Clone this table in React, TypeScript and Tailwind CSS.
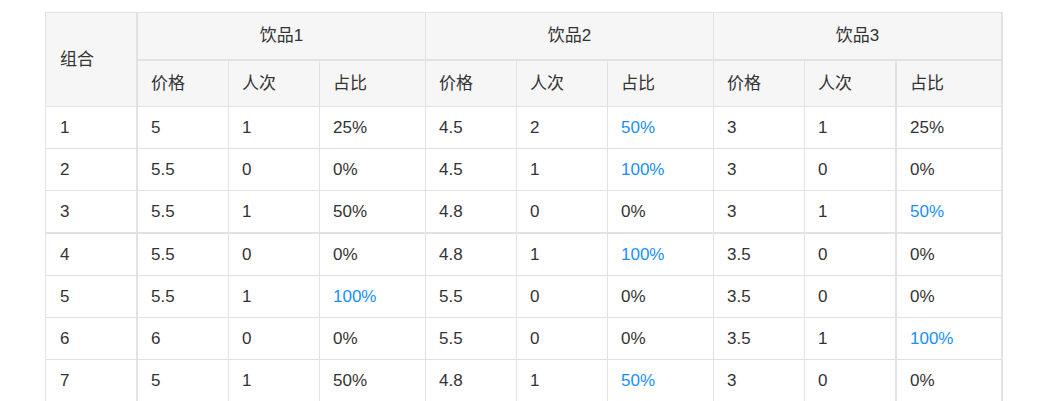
import React from "react";

const rows: string[][] = [
  ["1", "5", "1", "25%", "4.5", "2", "50%", "3", "1", "25%"],
  ["2", "5.5", "0", "0%", "4.5", "1", "100%", "3", "0", "0%"],
  ["3", "5.5", "1", "50%", "4.8", "0", "0%", "3", "1", "50%"],
  ["4", "5.5", "0", "0%", "4.8", "1", "100%", "3.5", "0", "0%"],
  ["5", "5.5", "1", "100%", "5.5", "0", "0%", "3.5", "0", "0%"],
  ["6", "6", "0", "0%", "5.5", "0", "0%", "3.5", "1", "100%"],
  ["7", "5", "1", "50%", "4.8", "1", "50%", "3", "0", "0%"],
];

const blue: Record<string, boolean> = {
  "0-6": true,
  "1-6": true,
  "2-9": true,
  "3-6": true,
  "4-3": true,
  "5-9": true,
  "6-6": true,
};

const rightBorder = [
  "border-r-2",
  "border-r",
  "border-r",
  "border-r",
  "border-r",
  "border-r",
  "border-r",
  "border-r",
  "border-r-2",
  "border-r-2",
];

export default function App() {
  const font = {
    fontFamily: '"Liberation Sans", Arial, "Noto Sans CJK SC", sans-serif',
  };
  return (
    <div className="w-[1042px] h-[401px] overflow-hidden bg-white pl-[45px] pt-[12px]" style={font}>
      <div className="grid grid-cols-[93px_91px_91px_106px_91px_91px_106px_91px_92px_106px] grid-rows-[48px_46px_42px_42px_43px_42px_42px_42px_42px] w-[958px] border-t border-[#e2e2e2] text-[17px] text-[#333333]">
        <div className="row-span-2 flex items-center pl-[14px] bg-[#f6f6f6] border-l border-r-2 border-b border-[#e2e2e2]">
          组合
        </div>
        {["饮品1", "饮品2", "饮品3"].map((h, i) => (
          <div
            key={h}
            className={`col-span-3 flex items-center justify-center bg-[#f6f6f6] border-b-2 border-[#e2e2e2] ${
              i === 2 ? "border-r-2" : "border-r"
            }`}
          >
            {h}
          </div>
        ))}
        {[0, 1, 2].flatMap((g) =>
          ["价格", "人次", "占比"].map((h, j) => {
            const col = 1 + g * 3 + j;
            return (
              <div
                key={`${g}-${j}`}
                className={`flex items-center pl-[13px] bg-[#f6f6f6] border-b border-[#e2e2e2] ${rightBorder[col]}`}
              >
                {h}
              </div>
            );
          })
        )}
        {rows.flatMap((r, ri) =>
          r.map((v, ci) => (
            <div
              key={`${ri}-${ci}`}
              className={`flex items-center border-[#e2e2e2] ${rightBorder[ci]} ${
                ri === 2 ? "border-b-2" : "border-b"
              } ${ci === 0 ? "border-l pl-[14px]" : "pl-[13px]"} ${
                blue[`${ri}-${ci}`] ? "text-[#1890ff]" : ""
              }`}
            >
              {v}
            </div>
          ))
        )}
      </div>
    </div>
  );
}
